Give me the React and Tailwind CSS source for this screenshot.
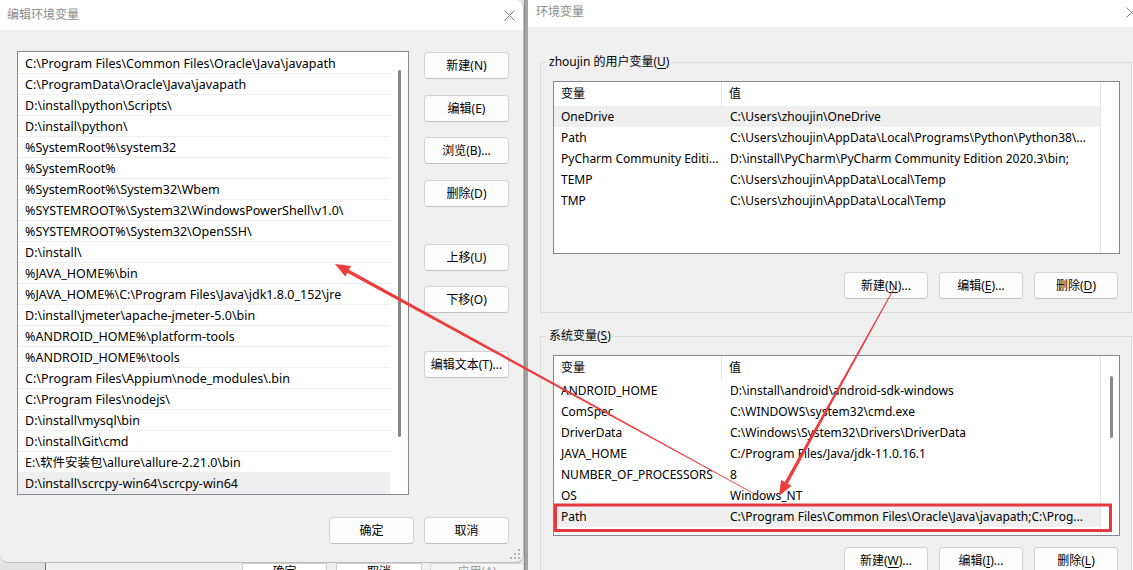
import React from 'react';

const leftItems = [
  'C:\\Program Files\\Common Files\\Oracle\\Java\\javapath',
  'C:\\ProgramData\\Oracle\\Java\\javapath',
  'D:\\install\\python\\Scripts\\',
  'D:\\install\\python\\',
  '%SystemRoot%\\system32',
  '%SystemRoot%',
  '%SystemRoot%\\System32\\Wbem',
  '%SYSTEMROOT%\\System32\\WindowsPowerShell\\v1.0\\',
  '%SYSTEMROOT%\\System32\\OpenSSH\\',
  'D:\\install\\',
  '%JAVA_HOME%\\bin',
  '%JAVA_HOME%\\C:\\Program Files\\Java\\jdk1.8.0_152\\jre',
  'D:\\install\\jmeter\\apache-jmeter-5.0\\bin',
  '%ANDROID_HOME%\\platform-tools',
  '%ANDROID_HOME%\\tools',
  'C:\\Program Files\\Appium\\node_modules\\.bin',
  'C:\\Program Files\\nodejs\\',
  'D:\\install\\mysql\\bin',
  'D:\\install\\Git\\cmd',
  'E:\\软件安装包\\allure\\allure-2.21.0\\bin',
  'D:\\install\\scrcpy-win64\\scrcpy-win64',
];

const userVars = [
  ['OneDrive', 'C:\\Users\\zhoujin\\OneDrive'],
  ['Path', 'C:\\Users\\zhoujin\\AppData\\Local\\Programs\\Python\\Python38\\...'],
  ['PyCharm Community Editi...', 'D:\\install\\PyCharm\\PyCharm Community Edition 2020.3\\bin;'],
  ['TEMP', 'C:\\Users\\zhoujin\\AppData\\Local\\Temp'],
  ['TMP', 'C:\\Users\\zhoujin\\AppData\\Local\\Temp'],
];

const sysVars = [
  ['ANDROID_HOME', 'D:\\install\\android\\android-sdk-windows'],
  ['ComSpec', 'C:\\WINDOWS\\system32\\cmd.exe'],
  ['DriverData', 'C:\\Windows\\System32\\Drivers\\DriverData'],
  ['JAVA_HOME', 'C:/Program Files/Java/jdk-11.0.16.1'],
  ['NUMBER_OF_PROCESSORS', '8'],
  ['OS', 'Windows_NT'],
  ['Path', 'C:\\Program Files\\Common Files\\Oracle\\Java\\javapath;C:\\Prog...'],
];

function Btn({ children, className = '' }) {
  return (
    <div
      className={`h-[27px] bg-[#fdfdfd] border border-[#d3d3d3] border-b-[#c2c2c2] rounded-[4px] flex items-center justify-center text-[12px] text-black whitespace-nowrap ${className}`}
    >
      {children}
    </div>
  );
}

function CloseX({ color = '#7a7a7a' }) {
  return (
    <svg width="11" height="11" viewBox="0 0 11 11">
      <path d="M0.5 0.5 L10.5 10.5 M10.5 0.5 L0.5 10.5" stroke={color} strokeWidth="1" fill="none" />
    </svg>
  );
}

function U({ children }) {
  return <span className="underline underline-offset-2">{children}</span>;
}

function taper(tx, ty, hx, hy, w0, w1, hl, hw) {
  const dx = hx - tx;
  const dy = hy - ty;
  const L = Math.hypot(dx, dy);
  const ux = dx / L;
  const uy = dy / L;
  const nx = -uy;
  const ny = ux;
  const bx = hx - ux * hl;
  const by = hy - uy * hl;
  const p = (x, y) => `${x.toFixed(2)},${y.toFixed(2)}`;
  return [
    p(tx + (nx * w0) / 2, ty + (ny * w0) / 2),
    p(bx + (nx * w1) / 2, by + (ny * w1) / 2),
    p(bx + nx * hw, by + ny * hw),
    p(hx, hy),
    p(bx - nx * hw, by - ny * hw),
    p(bx - (nx * w1) / 2, by - (ny * w1) / 2),
    p(tx - (nx * w0) / 2, ty - (ny * w0) / 2),
  ].join(' ');
}

function VarList({ rows, height, highlight, scroll }) {
  return (
    <div className={`ml-[12px] w-[567px] border border-[#828790] bg-white flex overflow-hidden ${height}`}>
      <div className="w-[546px] flex flex-col">
        <div className="h-[24px] flex items-center text-[12px] shrink-0">
          <div className="w-[168px] h-full flex items-center pl-[7px] border-r border-[#e5e5e5]">变量</div>
          <div className="flex-1 h-full flex items-center pl-[7px]">值</div>
        </div>
        {rows.map(([k, v], i) => (
          <div
            key={i}
            className={`h-[21px] shrink-0 flex items-center text-[12px] whitespace-nowrap ${i === highlight ? 'bg-[#efefef]' : ''}`}
          >
            <div className="w-[168px] pl-[7px] overflow-hidden">{k}</div>
            <div className="flex-1 pl-[8px] overflow-hidden">{v}</div>
          </div>
        ))}
      </div>
      <div className="flex-1 border-l border-[#e5e5e5] flex flex-col">
        {scroll && <div className="ml-[9px] mt-[20px] w-[3px] h-[62px] rounded-full bg-[#8a8a8a]" />}
        {!scroll && <div className="h-[48px] w-full" />}
      </div>
    </div>
  );
}

export default function App() {
  return (
    <div className="w-[1133px] h-[570px] overflow-hidden relative flex bg-[#a9a9a9] font-['Noto_Sans','Noto_Sans_CJK_SC',sans-serif] text-black">
      {/* Left dialog column */}
      <div className="w-[524px] shrink-0 flex flex-col bg-[#e6e6e6]">
        <div className="h-[563px] shrink-0 bg-[#f0f0f0] rounded-tr-[8px] rounded-b-[8px] border-r border-b border-[#bdbdbd] flex flex-col overflow-hidden relative">
          <div className="h-[30px] shrink-0 bg-white flex items-center justify-between pl-[7px] pr-[8px]">
            <span className="text-[12px] text-[#8c8c8c]">编辑环境变量</span>
            <CloseX />
          </div>
          <div className="flex pl-[17px] pt-[21px]">
            <div className="w-[392px] h-[444px] border border-[#828790] bg-white flex overflow-hidden">
              <div className="w-[372px] flex flex-col pt-[1px]">
                {leftItems.map((t, i) => (
                  <div
                    key={i}
                    className={`h-[21px] shrink-0 flex items-center pl-[7px] pt-[2px] border-b border-[#efefef] whitespace-nowrap text-[12.5px] ${i === 20 ? 'bg-[#efefef]' : ''}`}
                  >
                    {t}
                  </div>
                ))}
              </div>
              <div className="flex-1 flex flex-col">
                <div className="ml-[8px] mt-[18px] w-[3px] h-[367px] rounded-full bg-[#868686]" />
              </div>
            </div>
            <div className="ml-[15px] pt-[1px] flex flex-col w-[85px]">
              <Btn className="w-[85px]">新建(N)</Btn>
              <Btn className="w-[85px] mt-[16px]">编辑(E)</Btn>
              <Btn className="w-[85px] mt-[15px]">浏览(B)...</Btn>
              <Btn className="w-[85px] mt-[16px]">删除(D)</Btn>
              <Btn className="w-[85px] mt-[37px]">上移(U)</Btn>
              <Btn className="w-[85px] mt-[15px]">下移(O)</Btn>
              <Btn className="w-[85px] mt-[38px]">编辑文本(T)...</Btn>
            </div>
          </div>
          <div className="flex justify-end gap-[10px] pr-[14px] mt-[22px]">
            <Btn className="w-[85px]">确定</Btn>
            <Btn className="w-[85px]">取消</Btn>
          </div>
          <svg className="absolute right-[3px] bottom-[3px]" width="10" height="10" viewBox="0 0 10 10">
            <rect x="8" y="0" width="2" height="2" fill="#b5b5b5" />
            <rect x="4" y="4" width="2" height="2" fill="#b5b5b5" />
            <rect x="8" y="4" width="2" height="2" fill="#b5b5b5" />
            <rect x="0" y="8" width="2" height="2" fill="#b5b5b5" />
            <rect x="4" y="8" width="2" height="2" fill="#b5b5b5" />
            <rect x="8" y="8" width="2" height="2" fill="#b5b5b5" />
          </svg>
        </div>
        {/* window behind */}
        <div className="h-[7px] shrink-0 bg-[#f0f0f0] flex overflow-hidden">
          <div className="w-[46px] shrink-0 bg-[#e2e2e2] border-r border-[#6e6e6e]" />
          <div className="ml-[196px] w-[85px] h-[27px] shrink-0 border border-[#cfcfcf] bg-white flex justify-center text-[12px] leading-[12px] pt-[2px]">确定</div>
          <div className="ml-[9px] w-[86px] h-[27px] shrink-0 border border-[#cfcfcf] bg-white flex justify-center text-[12px] leading-[12px] pt-[2px]">取消</div>
          <div className="ml-[8px] w-[94px] h-[27px] shrink-0 border border-[#d8d8d8] bg-[#f5f5f5] flex justify-center text-[12px] leading-[12px] pt-[2px] text-[#9a9a9a]">应用(A)</div>
        </div>
      </div>

      {/* strip between */}
      <div className="w-[4px] shrink-0 bg-[#a4a4a4] border-l border-[#8c8c8c]" />

      {/* Right dialog */}
      <div className="w-[615px] shrink-0 bg-[#f0f0f0] flex flex-col">
        <div className="h-[27px] shrink-0 bg-white flex items-center justify-between pl-[8px] pr-[6px] pb-[3px]">
          <span className="text-[12px] text-[#8c8c8c]">环境变量</span>
          <CloseX color="#8a8a8a" />
        </div>
        <div className="pl-[12px] flex flex-col">
          <fieldset className="mt-[27px] w-[592px] border border-[#dadada] pb-[13px]">
            <legend className="ml-[6px] px-[2px] text-[12px] leading-[16px]">
              zhoujin 的用户变量(<U>U</U>)
            </legend>
            <div className="mt-[11px]">
              <VarList rows={userVars} height="h-[173px]" highlight={0} scroll={false} />
            </div>
            <div className="flex justify-end gap-[11px] pr-[13px] mt-[18px]">
              <Btn className="w-[84px]">新建(<U>N</U>)...</Btn>
              <Btn className="w-[84px]">编辑(<U>E</U>)...</Btn>
              <Btn className="w-[84px]">删除(<U>D</U>)</Btn>
            </div>
          </fieldset>
          <fieldset className="mt-[15px] w-[592px] border border-[#dadada] pb-[13px]">
            <legend className="ml-[6px] px-[2px] text-[12px] leading-[16px]">
              系统变量(<U>S</U>)
            </legend>
            <div className="mt-[11px]">
              <VarList rows={sysVars} height="h-[181px]" highlight={6} scroll={true} />
            </div>
            <div className="flex justify-end gap-[11px] pr-[13px] mt-[11px]">
              <Btn className="w-[84px]">新建(<U>W</U>)...</Btn>
              <Btn className="w-[84px]">编辑(<U>I</U>)...</Btn>
              <Btn className="w-[84px]">删除(<U>L</U>)</Btn>
            </div>
          </fieldset>
        </div>
      </div>

      {/* annotation overlay */}
      <svg className="absolute left-0 top-0 pointer-events-none" width="1133" height="570" viewBox="0 0 1133 570">
        <rect x="555.5" y="505" width="555" height="25.5" fill="none" stroke="#e8383d" strokeWidth="3" />
        <polygon points={taper(760, 497, 335, 264, 0.8, 3.4, 15, 6)} fill="#ee3b3b" />
        <polygon points={taper(897, 283, 779, 496, 0.8, 3.4, 15, 6)} fill="#ee3b3b" />
      </svg>
    </div>
  );
}
